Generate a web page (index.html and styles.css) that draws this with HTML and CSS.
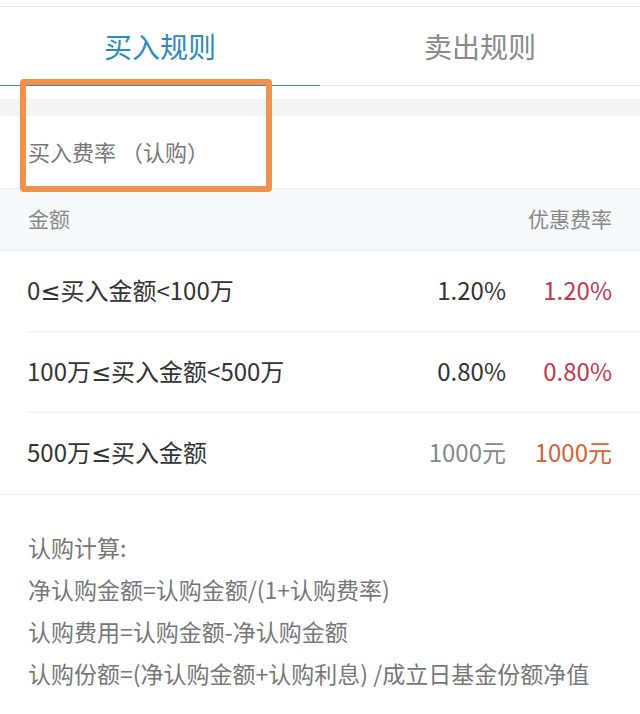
FILE: index.html
```
<!DOCTYPE html>
<html lang="zh-CN">
<head>
    <meta charset="UTF-8">
    <meta name="viewport" content="width=device-width, initial-scale=1.0">
    <title>买入规则</title>
    <link rel="stylesheet" href="styles.css">
</head>
<body>
    <div class="top-bar"></div>

    <!-- Tabs -->
    <div class="tabs">
        <div class="tab active">买入规则</div>
        <div class="tab">卖出规则</div>
    </div>

    <div class="gap"></div>
    <div class="band"></div>

    <div class="section-title">买入费率 （认购）</div>

    <!-- Fee table -->
    <div class="table-head">
        <span>金额</span>
        <span>优惠费率</span>
    </div>
    <div class="rows">
        <div class="row">
            <span class="range">0<span class="le">≤</span>买入金额&lt;100万</span>
            <div class="vals">
                <span class="val">1.20%</span>
                <span class="val red">1.20%</span>
            </div>
        </div>
        <div class="row">
            <span class="range">100万<span class="le">≤</span>买入金额&lt;500万</span>
            <div class="vals">
                <span class="val">0.80%</span>
                <span class="val red">0.80%</span>
            </div>
        </div>
        <div class="row">
            <span class="range">500万<span class="le">≤</span>买入金额</span>
            <div class="vals">
                <span class="val muted">1000元</span>
                <span class="val orange">1000元</span>
            </div>
        </div>
    </div>

    <!-- Calculation notes -->
    <div class="notes">
        <p>认购计算:</p>
        <p>净认购金额=认购金额/(1+认购费率)</p>
        <p>认购费用=认购金额-净认购金额</p>
        <p>认购份额=(净认购金额+认购利息) /成立日基金份额净值</p>
    </div>

    <!-- Highlight box -->
    <div class="highlight"></div>
</body>
</html>
```

FILE: styles.css
```
body {
    font-family: "Noto Sans CJK SC", "Noto Sans", sans-serif;
    margin: 0;
    padding: 0;
    background-color: #fff;
    color: #333;
    position: relative;
}

.top-bar {
    height: 6px;
    border-bottom: 1px solid #e8e8e8;
}

/* Tabs */
.tabs {
    display: flex;
    height: 78px;
    border-bottom: 1px solid #e4e4e4;
}

.tab {
    flex: 1;
    display: flex;
    justify-content: center;
    align-items: center;
    font-size: 28px;
    color: #8a8a8a;
}

.tab.active {
    color: #2d8bbf;
    border-bottom: 1px solid #4b86ad;
    margin-bottom: -1px;
}

.gap {
    height: 13px;
}

.band {
    height: 17px;
    background-color: #f4f4f4;
}

.section-title {
    height: 72px;
    display: flex;
    align-items: center;
    padding-left: 28px;
    font-size: 22px;
    color: #777;
    box-sizing: border-box;
    padding-bottom: 2px;
}

/* Table */
.table-head {
    height: 63px;
    box-sizing: border-box;
    display: flex;
    justify-content: space-between;
    align-items: center;
    padding: 0 28px 4px;
    background-color: #f7f8fa;
    border-top: 1px solid #f0f0f0;
    border-bottom: 1px solid #ececec;
    font-size: 21px;
    color: #888;
}

.rows {
    border-bottom: 1px solid #ececec;
}

.row {
    height: 81px;
    box-sizing: border-box;
    margin-left: 27px;
    padding: 0 28px 4px 0;
    display: flex;
    justify-content: space-between;
    align-items: center;
    border-bottom: 1px solid #efefef;
    font-size: 24px;
    color: #333;
}

.row:last-child {
    border-bottom: none;
}

.le {
    font-family: "DejaVu Sans", sans-serif;
    font-size: 24px;
}

.vals {
    display: flex;
    gap: 16px;
}

.val {
    width: 90px;
    text-align: right;
}

.val.red {
    color: #c4374f;
}

.val.muted {
    color: #888;
}

.val.orange {
    color: #d6623a;
}

/* Notes */
.notes {
    padding: 31px 28px 0;
    font-size: 23px;
    color: #777;
}

.notes p {
    margin: 0;
    line-height: 42px;
}

/* Orange annotation frame */
.highlight {
    position: absolute;
    left: 20px;
    top: 79px;
    width: 240px;
    height: 101px;
    border: 6px solid #f0924a;
    border-radius: 4px;
}
```
